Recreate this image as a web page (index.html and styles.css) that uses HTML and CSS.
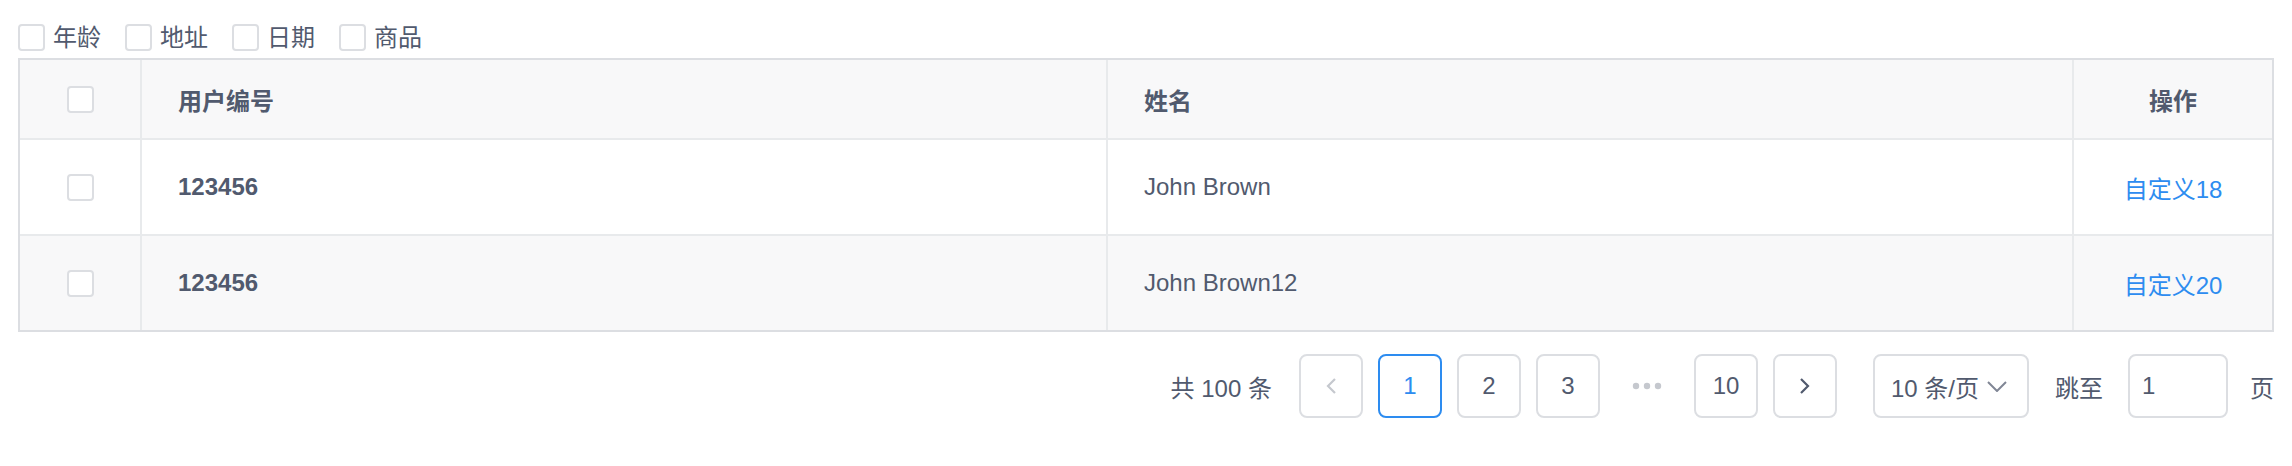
FILE: index.html
```html
<!DOCTYPE html>
<html lang="zh-CN">
<head>
<meta charset="utf-8">
<title>Table</title>
<link rel="stylesheet" href="styles.css">
</head>
<body>
<div class="page">
  <div class="filters">
    <label class="cb-item"><span class="cb"></span><span class="cb-label">年龄</span></label>
    <label class="cb-item"><span class="cb"></span><span class="cb-label">地址</span></label>
    <label class="cb-item"><span class="cb"></span><span class="cb-label">日期</span></label>
    <label class="cb-item"><span class="cb"></span><span class="cb-label">商品</span></label>
  </div>

  <div class="table-wrap">
    <table class="grid">
      <colgroup>
        <col class="c-sel"><col><col><col class="c-op">
      </colgroup>
      <thead>
        <tr>
          <th class="sel"><span class="cb"></span></th>
          <th>用户编号</th>
          <th>姓名</th>
          <th class="op">操作</th>
        </tr>
      </thead>
      <tbody>
        <tr>
          <td class="sel"><span class="cb"></span></td>
          <td class="strong">123456</td>
          <td>John Brown</td>
          <td class="op"><a class="link">自定义18</a></td>
        </tr>
        <tr class="stripe">
          <td class="sel"><span class="cb"></span></td>
          <td class="strong">123456</td>
          <td>John Brown12</td>
          <td class="op"><a class="link">自定义20</a></td>
        </tr>
      </tbody>
    </table>
  </div>

  <nav class="pager">
    <span class="total">共 100 条</span>
    <span class="pg-item pg-prev">
      <svg width="14" height="16" viewBox="0 0 14 16"><path d="M11 1 L4 8 L11 15" fill="none" stroke="#c5c8ce" stroke-width="2.2"/></svg>
    </span>
    <span class="pg-item active">1</span>
    <span class="pg-item">2</span>
    <span class="pg-item">3</span>
    <span class="pg-item pg-ellipsis">
      <svg width="30" height="8" viewBox="0 0 30 8"><circle cx="4" cy="4" r="3.2" fill="#c5c8ce"/><circle cx="15" cy="4" r="3.2" fill="#c5c8ce"/><circle cx="26" cy="4" r="3.2" fill="#c5c8ce"/></svg>
    </span>
    <span class="pg-item">10</span>
    <span class="pg-item pg-next">
      <svg width="14" height="16" viewBox="0 0 14 16"><path d="M3 1 L10 8 L3 15" fill="none" stroke="#515a6e" stroke-width="2.2"/></svg>
    </span>
    <span class="sizer">
      <span>10 条/页</span>
      <svg width="20" height="11" viewBox="0 0 20 11"><path d="M1 1 L10 10 L19 1" fill="none" stroke="#808695" stroke-width="2"/></svg>
    </span>
    <span class="jump-label">跳至</span>
    <span class="jump-input">1</span>
    <span class="unit">页</span>
  </nav>
</div>
</body>
</html>
```
FILE: styles.css
```css
html, body {
  margin: 0;
  background: #fff;
}
body {
  font-family: "Liberation Sans", "Noto Sans CJK SC", sans-serif;
  font-size: 24px;
  color: #515a6e;
}
.page {
  padding: 0 18px;
}

/* filter checkboxes */
.filters {
  display: flex;
  align-items: center;
  height: 27px;
  margin: 24px 0 7px;
}
.cb-item {
  display: flex;
  align-items: center;
  margin-right: 24px;
}
.cb {
  display: block;
  width: 27px;
  height: 27px;
  box-sizing: border-box;
  border: 2px solid #dcdee2;
  border-radius: 4px;
  background: #fff;
}
.cb-label {
  margin-left: 8px;
  line-height: 27px;
}

/* table */
.table-wrap {
  border: 2px solid #dcdee2;
}
.grid {
  width: 100%;
  border-collapse: separate;
  border-spacing: 0;
  table-layout: fixed;
}
.c-sel { width: 122px; }
.c-op { width: 198px; }
.grid th,
.grid td {
  padding: 0 36px;
  text-align: left;
  vertical-align: middle;
  border-right: 2px solid #e8eaec;
  border-bottom: 2px solid #e8eaec;
  white-space: nowrap;
}
.grid th:last-child,
.grid td:last-child {
  border-right: none;
}
.grid thead tr { height: 80px; }
.grid tbody tr { height: 96px; }
.grid tbody tr:last-child { height: 94px; }
.grid tbody tr:last-child td { border-bottom: none; }
.grid thead th {
  background: #f8f8f9;
  font-weight: 700;
}
.grid .sel {
  padding: 0;
}
.grid .sel .cb {
  margin: 0 auto;
}
.grid .op {
  padding: 0;
  text-align: center;
}
.stripe td {
  background: #f8f8f9;
}
.strong {
  font-weight: 700;
}
.link {
  color: #2d8cf0;
  text-decoration: none;
}

/* pager */
.pager {
  display: flex;
  justify-content: flex-end;
  align-items: center;
  height: 64px;
  margin-top: 22px;
}
.total {
  margin-right: 27px;
}
.pg-item {
  width: 64px;
  height: 64px;
  box-sizing: border-box;
  border: 2px solid #dcdee2;
  border-radius: 8px;
  background: #fff;
  display: flex;
  align-items: center;
  justify-content: center;
  margin-right: 15px;
}
.pg-item.active {
  border-color: #2d8cf0;
  color: #2d8cf0;
}
.pg-ellipsis {
  border-color: transparent;
}
.pg-next {
  margin-right: 36px;
}
.sizer {
  width: 156px;
  height: 64px;
  box-sizing: border-box;
  border: 2px solid #dcdee2;
  border-radius: 8px;
  display: flex;
  align-items: center;
  justify-content: space-between;
  padding: 0 20px 0 16px;
  margin-right: 26px;
}
.jump-label {
  margin-right: 25px;
}
.jump-input {
  width: 100px;
  height: 64px;
  box-sizing: border-box;
  border: 2px solid #dcdee2;
  border-radius: 8px;
  display: flex;
  align-items: center;
  padding-left: 12px;
  margin-right: 22px;
}
```
